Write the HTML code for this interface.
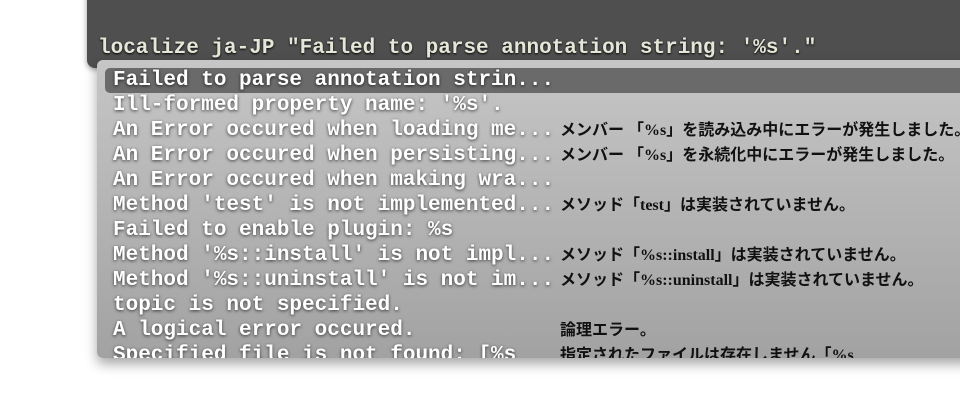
<!DOCTYPE html>
<html><head><meta charset="utf-8"><style>
body{margin:0;width:960px;height:403px;background:#fff;position:relative;overflow:hidden}
.top{position:absolute;left:87px;top:-10px;width:900px;height:78px;background:#4f4f4f;border-radius:0 0 0 8px;box-shadow:0 2px 6px rgba(0,0,0,.4)}
.cmd{position:absolute;left:98px;top:37px;font:bold 21px "Liberation Mono",monospace;color:#e4e6d8;text-shadow:0 1px 2px #000;white-space:pre}
.pop{position:absolute;left:97px;top:60px;width:880px;height:298px;background:linear-gradient(#c6c6c6,#a2a2a2);border-radius:6px;box-shadow:0 6px 12px rgba(0,0,0,.35);overflow:hidden}
.sel{position:absolute;left:8px;top:8px;width:870px;height:25px;background:#6a6a6a;border-radius:5px}
.row{position:absolute;left:16px;height:25px;font:bold 21px/25px "Liberation Mono",monospace;color:#fff;text-shadow:0 1px 3px rgba(0,0,0,.7);white-space:pre}
.jp{position:absolute;left:463px;font:bold 16px/25px "Liberation Serif","Noto Sans CJK JP",sans-serif;color:#111;white-space:pre}
</style></head><body>
<div class="top"></div>
<div class="cmd">localize ja-JP "Failed to parse annotation string: '%s'."</div>
<div class="pop">
<div class="sel"></div>
<div class="row" style="top:8px">Failed to parse annotation strin...</div>
<div class="row" style="top:33px">Ill-formed property name: '%s'.</div>
<div class="row" style="top:58px">An Error occured when loading me...</div><div class="jp" style="top:58px">メンバー 「%s」を読み込み中にエラーが発生しました。</div>
<div class="row" style="top:83px">An Error occured when persisting...</div><div class="jp" style="top:83px">メンバー 「%s」を永続化中にエラーが発生しました。</div>
<div class="row" style="top:108px">An Error occured when making wra...</div>
<div class="row" style="top:133px">Method 'test' is not implemented...</div><div class="jp" style="top:133px">メソッド「test」は実装されていません。</div>
<div class="row" style="top:158px">Failed to enable plugin: %s</div>
<div class="row" style="top:183px">Method '%s::install' is not impl...</div><div class="jp" style="top:183px">メソッド「%s::install」は実装されていません。</div>
<div class="row" style="top:208px">Method '%s::uninstall' is not im...</div><div class="jp" style="top:208px">メソッド「%s::uninstall」は実装されていません。</div>
<div class="row" style="top:233px">topic is not specified.</div>
<div class="row" style="top:258px">A logical error occured.</div><div class="jp" style="top:258px">論理エラー。</div>
<div class="row" style="top:283px">Specified file is not found: [%s</div><div class="jp" style="top:283px">指定されたファイルは存在しません「%s</div>
</div>
</body></html>
